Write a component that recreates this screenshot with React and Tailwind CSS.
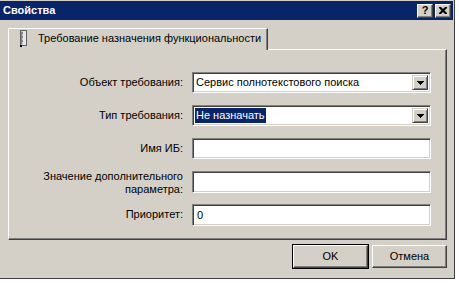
import React from "react";

const font = { fontFamily: '"Liberation Sans", Arial, sans-serif' };

function Sunken({ className = "", children }) {
  return (
    <div
      className={
        "relative bg-white border border-t-[#808080] border-l-[#808080] border-r-white border-b-white shadow-[inset_1px_1px_0_#404040,inset_-1px_-1px_0_#d4d0c8] " +
        className
      }
    >
      {children}
    </div>
  );
}

function DropButton() {
  return (
    <div className="absolute right-[2px] top-[2px] bottom-[2px] w-[16px] bg-[#d4d0c8] border border-t-[#d4d0c8] border-l-[#d4d0c8] border-r-[#404040] border-b-[#404040] shadow-[inset_1px_1px_0_#ffffff,inset_-1px_-1px_0_#808080] flex items-center justify-center">
      <svg width="7" height="4" viewBox="0 0 7 4">
        <path d="M0 0h7v1h-1v1h-1v1h-1v1h-1v-1h-1v-1h-1v-1h-1z" fill="#000" />
      </svg>
    </div>
  );
}

function CaptionButton({ children }) {
  return (
    <div className="w-[16px] h-[14px] bg-[#d4d0c8] border border-t-white border-l-white border-r-[#404040] border-b-[#404040] shadow-[inset_-1px_-1px_0_#808080] flex items-center justify-center">
      {children}
    </div>
  );
}

function Button({ children, isDefault }) {
  const inner = (
    <div className="w-full h-full bg-[#d4d0c8] border border-t-white border-l-white border-r-[#404040] border-b-[#404040] shadow-[inset_-1px_-1px_0_#808080] flex items-center justify-center text-[11px] text-black">
      {children}
    </div>
  );
  if (isDefault) {
    return <div className="w-[77px] h-[25px] border border-black">{inner}</div>;
  }
  return <div className="w-[75px] h-[23px] mt-[1px]">{inner}</div>;
}

function Label({ children }) {
  return (
    <div className="flex items-center justify-end text-right text-[11px] leading-[13px] text-black">
      {children}
    </div>
  );
}

export default function App() {
  return (
    <div className="w-[459px] h-[283px] bg-white" style={font}>
      <div className="w-[455px] h-[279px] bg-[#d4d0c8] border-r border-b border-r-[#404040] border-b-[#404040] flex flex-col">
        {/* Title bar */}
        <div className="h-[20px] pt-[1px] pr-[1px]">
          <div className="h-[19px] bg-[#0a246a] flex items-center justify-between pl-[3px] pr-[2px]">
            <span className="text-white font-bold text-[11px] leading-none">Свойства</span>
            <div className="flex gap-[2px]">
              <CaptionButton>
                <span className="text-black font-bold text-[11px] leading-none mt-[-1px]">?</span>
              </CaptionButton>
              <CaptionButton>
                <svg width="8" height="7" viewBox="0 0 8 7">
                  <path d="M0 0h2l2 2 2-2h2v1l-2.5 2.5 2.5 2.5v1h-2l-2-2-2 2h-2v-1l2.5-2.5-2.5-2.5z" fill="#000" />
                </svg>
              </CaptionButton>
            </div>
          </div>
        </div>

        {/* Body */}
        <div className="pl-[8px] pt-[8px] flex flex-col">
          {/* Tab strip */}
          <div className="flex relative z-10">
            <div className="w-[260px] h-[22px] -mb-[1px] bg-[#d4d0c8] border-t border-l border-t-white border-l-white border-r border-r-[#404040] shadow-[inset_-1px_0_0_#808080] rounded-tl-[2px] flex items-center pl-[11px] pb-[3px]">
              <svg width="7" height="17" viewBox="0 0 7 17" className="mt-[1px]">
                <rect x="0.5" y="0.5" width="6" height="15" fill="#c8c8c8" stroke="#606060" />
                <rect x="3" y="1" width="3" height="14" fill="#e8e8e8" />
                <path d="M1 3h2M1 5h1M1 7h2M1 9h1M1 11h2M1 13h1" stroke="#404040" strokeWidth="1" />
                <rect x="0" y="15" width="2" height="2" fill="#000" />
              </svg>
              <span className="ml-[11px] text-[11px] text-black leading-none">
                Требование назначения функциональности
              </span>
            </div>
          </div>

          {/* Panel */}
          <div className="w-[439px] h-[191px] border border-t-white border-l-white border-r-[#404040] border-b-[#404040] shadow-[inset_-1px_-1px_0_#808080] pt-[22px]">
            <div className="grid grid-cols-[174px_239px] gap-x-[9px] gap-y-[12px] auto-rows-[21px]">
              <Label>Объект требования:</Label>
              <Sunken className="h-[21px]">
                <div className="h-full flex items-center pl-[3px] text-[11px] text-black">
                  Сервис полнотекстового поиска
                </div>
                <DropButton />
              </Sunken>

              <Label>Тип требования:</Label>
              <Sunken className="h-[21px]">
                <div className="h-full flex items-center pl-[2px] text-[11px]">
                  <span className="bg-[#0a246a] text-white px-[1px] leading-[15px]">Не назначать</span>
                </div>
                <DropButton />
              </Sunken>

              <Label>Имя ИБ:</Label>
              <Sunken className="h-[21px]" />

              <Label>
                <span className="mt-[2px]">
                  Значение дополнительного
                  <br />
                  параметра:
                </span>
              </Label>
              <Sunken className="h-[22px]" />

              <Label>Приоритет:</Label>
              <Sunken className="h-[22px]">
                <div className="h-full flex items-center pl-[4px] text-[11px] text-black">0</div>
              </Sunken>
            </div>
          </div>

          {/* Buttons */}
          <div className="w-[439px] flex justify-end gap-[3px] mt-[4px]">
            <Button isDefault>OK</Button>
            <Button>Отмена</Button>
          </div>
        </div>
      </div>
    </div>
  );
}
